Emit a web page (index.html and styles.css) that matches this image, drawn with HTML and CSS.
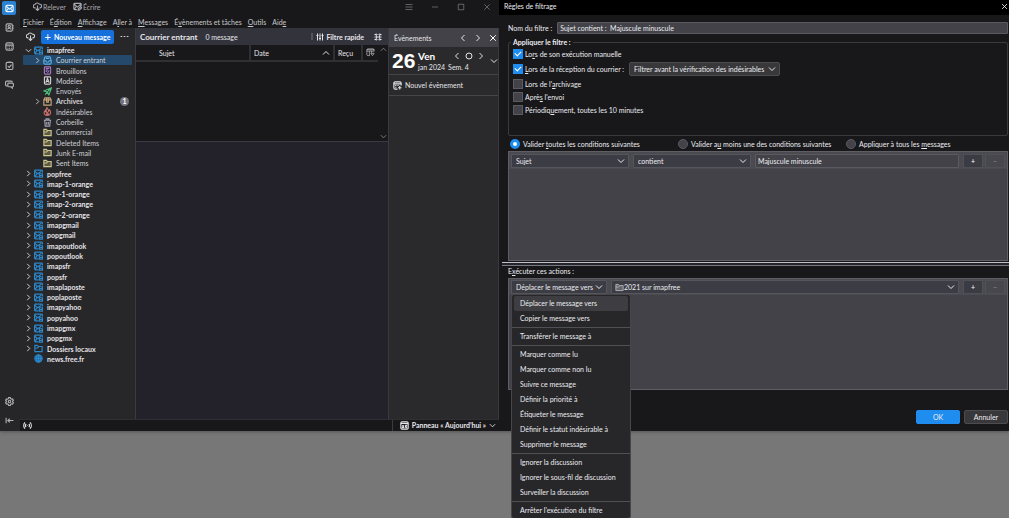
FILE: index.html
```html
<!DOCTYPE html>
<html lang="fr">
<head>
<meta charset="utf-8">
<title>Courrier entrant - Règles de filtrage</title>
<link rel="stylesheet" href="styles.css">
</head>
<body>
<svg class="sprite" aria-hidden="true">
  <symbol id="i-mail" viewBox="0 0 16 16"><rect x="1.5" y="2.5" width="13" height="11" rx="2"/><path d="M2 4l6 5 6-5M2 13l4-5M14 13l-4-5"/></symbol>
  <symbol id="i-book" viewBox="0 0 16 16"><rect x="2" y="1.500" width="11" height="13" rx="2"/><circle cx="7.500" cy="6" r="2"/><path d="M4.500 11.500c0-3 6-3 6 0M14.500 4v2M14.500 8v2M14.500 12v1"/></symbol>
  <symbol id="i-cal" viewBox="0 0 16 16"><rect x="1.500" y="1.500" width="13" height="13" rx="3"/><path d="M1.500 5.500h13M4.500 8.500h1.500M7.500 8.500h1.500M10.500 8.500h1.500M4.500 11.500h1.500M7.500 11.500h1.500M10.500 11.500h1.500"/></symbol>
  <symbol id="i-task" viewBox="0 0 16 16"><rect x="2" y="2.500" width="12" height="12.500" rx="2"/><path d="M5.500 2.500h5M5 9l2.500 2.500 4-5"/></symbol>
  <symbol id="i-chat" viewBox="0 0 16 16"><path d="M4 10.500H2.500a1.500 1.500 0 0 1-1.500-1.500V4a2 2 0 0 1 2-2h8a2 2 0 0 1 2 2"/><path d="M6.500 5.500H13a2 2 0 0 1 2 2V10a2 2 0 0 1-2 2v2.500L10.500 12h-4a1.500 1.500 0 0 1-1.500-1.500V7a1.500 1.500 0 0 1 1.500-1.500z"/></symbol>
  <symbol id="i-gear" viewBox="0 0 16 16"><path d="M6.500 1h3l.5 2 1.500.9 2-.6 1.500 2.600-1.500 1.400v1.400l1.500 1.400-1.500 2.600-2-.6-1.500.9-.5 2h-3l-.5-2-1.500-.9-2 .6L1 10.100l1.500-1.400V7.300L1 5.900l1.500-2.600 2 .6L6 3z"/><circle cx="8" cy="8" r="2.200"/></symbol>
  <symbol id="i-collapse" viewBox="0 0 16 16"><path d="M2 3v10M5 8h10M8.500 4.500L5 8l3.500 3.500"/></symbol>
  <symbol id="i-cloud" viewBox="0 0 16 16"><path d="M4.500 10.500h-1a3 3 0 0 1 0-6A4.500 4.500 0 0 1 11.500 4a3.200 3.200 0 0 1 1 6.500h-1M8 6v9M5 12l3 3 3-3"/></symbol>
  <symbol id="i-write" viewBox="0 0 16 16"><path d="M14.500 7V4a1.500 1.500 0 0 0-1.500-1.500H3A1.500 1.500 0 0 0 1.500 4v8A1.500 1.500 0 0 0 3 13.500h4M2 4l6 5 6-5M2 13l4-5M9 14.500l.5-2.500 4-4 2 2-4 4z"/></symbol>
  <symbol id="i-account" viewBox="0 0 16 16"><path d="M15 6V3.500A1.500 1.500 0 0 0 13.500 2h-11A1.500 1.500 0 0 0 1 3.500v9A1.500 1.500 0 0 0 2.500 14H8M1.500 4l5 4.500L13 4M2 13l3.500-5M9.500 8.500h5.500v3H9.500zM9.500 11.500h5.500v3H9.500z"/></symbol>
  <symbol id="i-inbox" viewBox="0 0 16 16"><path d="M1.500 8l1.500-5a1.500 1.500 0 0 1 1.500-1.500h7A1.500 1.500 0 0 1 13 3l1.500 5v4.500a2 2 0 0 1-2 2h-9a2 2 0 0 1-2-2zM1.500 8.500h3.500c0 3.500 6 3.500 6 0h3.500M5 4.500h6"/></symbol>
  <symbol id="i-draft" viewBox="0 0 16 16"><rect x="2.500" y="1.500" width="11" height="13" rx="1.500"/><path d="M5 4.500h6M5 7h4M5 9.500h2M8 12l3-4"/></symbol>
  <symbol id="i-template" viewBox="0 0 16 16"><rect x="2.500" y="1.500" width="11" height="13" rx="1.500"/><path d="M5 12l3-8 3 8M6 9.500h4"/></symbol>
  <symbol id="i-sent" viewBox="0 0 16 16"><path d="M1.500 7L15 1.500 10.500 14 7.500 9zM7.500 9L15 1.500M7.500 9L4 13.500"/></symbol>
  <symbol id="i-archive" viewBox="0 0 16 16"><path d="M1.500 5L3.500 1.500h9L14.500 5v9.500h-13zM1.500 5h13M6.500 1.500V9h3V1.500"/></symbol>
  <symbol id="i-junk" viewBox="0 0 16 16"><path d="M8 15c-7 0-7-6-4-9 0 2 1 3 2 3 0-4-1-5 1-8 1 3 3 3 3 6l1.500-2c3 4 3 10-3.500 10zM8 15c-3-2-1-3 0-5 1 2 3 3 0 5"/></symbol>
  <symbol id="i-trash" viewBox="0 0 16 16"><path d="M1.500 4h13M5.500 4V1.500h5V4M3 4l1 10.500h8L13 4M6.500 7v5M9.500 7v5"/></symbol>
  <symbol id="i-folder" viewBox="0 0 16 16"><path d="M1.500 13.500v-11h4.500L8 4.500h6.500v9zM1.500 7h5L8 5"/></symbol>
  <symbol id="i-globe" viewBox="0 0 16 16"><circle cx="8" cy="8" r="6.500"/><path d="M1.500 8h13M8 1.500v13M8 1.500c-5 4-5 9 0 13M8 1.500c5 4 5 9 0 13"/></symbol>
  <symbol id="i-right" viewBox="0 0 16 16"><path d="M5 2l6 6-6 6"/></symbol>
  <symbol id="i-left" viewBox="0 0 16 16"><path d="M11 2L5 8l6 6"/></symbol>
  <symbol id="i-down" viewBox="0 0 16 16"><path d="M2 5l6 6 6-6"/></symbol>
  <symbol id="i-up" viewBox="0 0 16 16"><path d="M2 11l6-6 6 6"/></symbol>
  <symbol id="i-x" viewBox="0 0 16 16"><path d="M2.500 2.500l11 11M13.500 2.500l-11 11"/></symbol>
  <symbol id="i-menu" viewBox="0 0 16 16"><path d="M1 3h14M1 8h14M1 13h14"/></symbol>
  <symbol id="i-min" viewBox="0 0 16 16"><path d="M2 8h12"/></symbol>
  <symbol id="i-max" viewBox="0 0 16 16"><path d="M2.500 2.500h11v11h-11z"/></symbol>
  <symbol id="i-dots" viewBox="0 0 16 16"><path d="M1 8h3M6.500 8h3M12 8h3"/></symbol>
  <symbol id="i-filter" viewBox="0 0 16 16"><path d="M3 1v14M8 1v14M13 1v14M1 5h4M6 11h4M11 5h4"/></symbol>
  <symbol id="i-display" viewBox="0 0 16 16"><path d="M1 3h3M7 3h2M12 3h3M4 8h8M1 13h3M7 13h2M12 13h3M4.500 1v14M11.500 1v14M1 8h2M13 8h2"/></symbol>
  <symbol id="i-cols" viewBox="0 0 16 16"><path d="M14.500 6V3.500a2 2 0 0 0-2-2h-9a2 2 0 0 0-2 2v8a2 2 0 0 0 2 2H7M1.500 3h13M1.500 5.500h13M6 5v8M10 5v4M8.500 9.500h6l-3 4z"/></symbol>
  <symbol id="i-newcal" viewBox="0 0 16 16"><path d="M14.500 8V4a2.500 2.500 0 0 0-2.500-2.500H4A2.500 2.500 0 0 0 1.500 4v8A2.500 2.500 0 0 0 4 14.500h4M1.500 5h13M4 8h2M8 8h2M4 11h2M12 9v6M9 12h6"/></symbol>
  <symbol id="i-today" viewBox="0 0 16 16"><rect x="1.500" y="1.500" width="13" height="13" rx="2"/><path d="M1.500 4.500h13M4 7.500l3 4M7 7.500l-3 4.500h3M9 7.500h3l-3 4.500M9 9l3.500 3.500"/></symbol>
  <symbol id="i-online" viewBox="0 0 16 16"><path d="M3.500 2.500c-3 3-3 8 0 11M12.500 2.500c3 3 3 8 0 11M5.500 5c-1.500 2-1.500 4 0 6M10.500 5c1.500 2 1.500 4 0 6M7.500 8h1"/></symbol>
  <symbol id="i-ring" viewBox="0 0 16 16"><circle cx="8" cy="8" r="6"/></symbol>
</svg>

<div class="desktop">
  <main class="mail">
    <nav class="spaces" aria-label="Espaces">
      <button class="space active" aria-label="Courrier"><svg><use href="#i-mail"/></svg></button>
      <button class="space" aria-label="Adresses"><svg><use href="#i-book"/></svg></button>
      <button class="space" aria-label="Agenda"><svg><use href="#i-cal"/></svg></button>
      <button class="space" aria-label="Tâches"><svg><use href="#i-task"/></svg></button>
      <button class="space" aria-label="Discussion"><svg><use href="#i-chat"/></svg></button>
      <button class="space push" aria-label="Paramètres"><svg><use href="#i-gear"/></svg></button>
      <button class="space" aria-label="Réduire"><svg><use href="#i-collapse"/></svg></button>
    </nav>
    <div class="mail-body">
      <header class="titlebar">
        <button><svg><use href="#i-cloud"/></svg>Relever</button>
        <button><svg><use href="#i-write"/></svg>Écrire</button>
        <div class="controls">
          <button aria-label="Menu"><svg><use href="#i-menu"/></svg></button>
          <button aria-label="Minimiser"><svg><use href="#i-min"/></svg></button>
          <button aria-label="Agrandir"><svg><use href="#i-max"/></svg></button>
          <button aria-label="Fermer"><svg><use href="#i-x"/></svg></button>
        </div>
      </header>
      <nav class="menubar">
        <button><u>F</u>ichier</button><button>É<u>d</u>ition</button><button><u>A</u>ffichage</button><button>A<u>l</u>ler à</button><button><u>M</u>essages</button><button>É<u>v</u>ènements et tâches</button><button><u>O</u>utils</button><button>Aid<u>e</u></button>
      </nav>
      <div class="panes">
        <section class="folders">
          <div class="folder-head">
            <button aria-label="Relever"><svg><use href="#i-cloud"/></svg></button>
            <button class="new-msg"><span class="plus">+</span>Nouveau message</button>
            <button aria-label="Options"><svg><use href="#i-dots"/></svg></button>
          </div>
          <ul class="tree">
            <li class="acc"><svg class="tw"><use href="#i-down"/></svg><svg class="blue"><use href="#i-account"/></svg>imapfree</li>
            <li class="sub sel"><svg class="tw"><use href="#i-right"/></svg><svg class="sky"><use href="#i-inbox"/></svg>Courrier entrant</li>
            <li class="sub"><i class="tw"></i><svg class="purple"><use href="#i-draft"/></svg>Brouillons</li>
            <li class="sub"><i class="tw"></i><svg><use href="#i-template"/></svg>Modèles</li>
            <li class="sub"><i class="tw"></i><svg class="green"><use href="#i-sent"/></svg>Envoyés</li>
            <li class="sub bold"><svg class="tw"><use href="#i-right"/></svg><svg class="tan"><use href="#i-archive"/></svg>Archives<span class="count">1</span></li>
            <li class="sub"><i class="tw"></i><svg class="red"><use href="#i-junk"/></svg>Indésirables</li>
            <li class="sub"><i class="tw"></i><svg class="grey"><use href="#i-trash"/></svg>Corbeille</li>
            <li class="sub"><i class="tw"></i><svg class="sand"><use href="#i-folder"/></svg>Commercial</li>
            <li class="sub"><i class="tw"></i><svg class="sand"><use href="#i-folder"/></svg>Deleted Items</li>
            <li class="sub"><i class="tw"></i><svg class="sand"><use href="#i-folder"/></svg>Junk E-mail</li>
            <li class="sub"><i class="tw"></i><svg class="sand"><use href="#i-folder"/></svg>Sent Items</li>
            <li class="acc"><svg class="tw"><use href="#i-right"/></svg><svg class="blue"><use href="#i-account"/></svg>popfree</li>
            <li class="acc"><svg class="tw"><use href="#i-right"/></svg><svg class="blue"><use href="#i-account"/></svg>imap-1-orange</li>
            <li class="acc"><svg class="tw"><use href="#i-right"/></svg><svg class="blue"><use href="#i-account"/></svg>pop-1-orange</li>
            <li class="acc"><svg class="tw"><use href="#i-right"/></svg><svg class="blue"><use href="#i-account"/></svg>imap-2-orange</li>
            <li class="acc"><svg class="tw"><use href="#i-right"/></svg><svg class="blue"><use href="#i-account"/></svg>pop-2-orange</li>
            <li class="acc"><svg class="tw"><use href="#i-right"/></svg><svg class="blue"><use href="#i-account"/></svg>imapgmail</li>
            <li class="acc"><svg class="tw"><use href="#i-right"/></svg><svg class="blue"><use href="#i-account"/></svg>popgmail</li>
            <li class="acc"><svg class="tw"><use href="#i-right"/></svg><svg class="blue"><use href="#i-account"/></svg>imapoutlook</li>
            <li class="acc"><svg class="tw"><use href="#i-right"/></svg><svg class="blue"><use href="#i-account"/></svg>popoutlook</li>
            <li class="acc"><svg class="tw"><use href="#i-right"/></svg><svg class="blue"><use href="#i-account"/></svg>imapsfr</li>
            <li class="acc"><svg class="tw"><use href="#i-right"/></svg><svg class="blue"><use href="#i-account"/></svg>popsfr</li>
            <li class="acc"><svg class="tw"><use href="#i-right"/></svg><svg class="blue"><use href="#i-account"/></svg>imaplaposte</li>
            <li class="acc"><svg class="tw"><use href="#i-right"/></svg><svg class="blue"><use href="#i-account"/></svg>poplaposte</li>
            <li class="acc"><svg class="tw"><use href="#i-right"/></svg><svg class="blue"><use href="#i-account"/></svg>imapyahoo</li>
            <li class="acc"><svg class="tw"><use href="#i-right"/></svg><svg class="blue"><use href="#i-account"/></svg>popyahoo</li>
            <li class="acc"><svg class="tw"><use href="#i-right"/></svg><svg class="blue"><use href="#i-account"/></svg>imapgmx</li>
            <li class="acc"><svg class="tw"><use href="#i-right"/></svg><svg class="blue"><use href="#i-account"/></svg>popgmx</li>
            <li class="acc"><svg class="tw"><use href="#i-right"/></svg><svg class="blue"><use href="#i-folder"/></svg>Dossiers locaux</li>
            <li class="acc"><i class="tw"></i><svg class="blue globe"><use href="#i-globe"/></svg>news.free.fr</li>
          </ul>
        </section>
        <section class="thread">
          <header class="thread-head">
            <h1>Courrier entrant</h1><span>0 message</span>
            <button class="quick"><svg><use href="#i-filter"/></svg>Filtre rapide</button>
            <button aria-label="Affichage"><svg><use href="#i-display"/></svg></button>
          </header>
          <div class="list">
            <table>
              <thead><tr><th class="c-subject">Sujet</th><th><span class="date">Date<svg><use href="#i-up"/></svg></span></th><th class="c-recv">Reçu</th><th class="c-pick"><svg><use href="#i-cols"/></svg></th></tr></thead>
            </table>
            <div class="scroll"><svg><use href="#i-up"/></svg><svg><use href="#i-down"/></svg></div>
          </div>
          <div class="preview"></div>
        </section>
        <aside class="today">
          <header class="today-head"><h2>Évènements</h2>
            <button aria-label="Précédent"><svg><use href="#i-left"/></svg></button>
            <button aria-label="Suivant"><svg><use href="#i-right"/></svg></button>
            <button class="bright" aria-label="Fermer"><svg><use href="#i-x"/></svg></button>
          </header>
          <div class="day">
            <strong class="num">26</strong>
            <div class="day-info">
              <div class="day-top"><strong>Ven</strong>
                <button aria-label="Jour précédent"><svg><use href="#i-left"/></svg></button>
                <button aria-label="Aujourd'hui"><svg><use href="#i-ring"/></svg></button>
                <button aria-label="Jour suivant"><svg><use href="#i-right"/></svg></button>
              </div>
              <div class="month"><span>jan 2024</span><span>Sem. 4</span></div>
            </div>
            <button aria-label="Mini-mois"><svg><use href="#i-down"/></svg></button>
          </div>
          <button class="new-event"><svg><use href="#i-newcal"/></svg>Nouvel évènement</button>
        </aside>
      </div>
      <footer class="status">
        <svg><use href="#i-online"/></svg>
        <button><svg><use href="#i-today"/></svg>Panneau « Aujourd’hui »<svg class="chev"><use href="#i-down"/></svg></button>
      </footer>
    </div>
  </main>

  <form class="dialog" onsubmit="return false">
    <header class="dlg-title"><span>Règles de filtrage</span><button type="button" aria-label="Fermer"><svg><use href="#i-x"/></svg></button></header>
    <div class="dlg-body">
      <div class="name"><label for="fname">Nom du f<u>i</u>ltre :</label><input id="fname" type="text" value="Sujet contient :  Majuscule minuscule"></div>
      <fieldset>
        <legend>Appliquer le filtre :</legend>
        <label class="opt"><input type="checkbox" checked><span>Lo<u>r</u>s de son exécution manuelle</span></label>
        <div class="opt tall">
          <label class="opt"><input type="checkbox" checked><span><u>L</u>ors de la réception du courrier :</span></label>
          <span class="pick when"><select aria-label="Moment du filtrage"><option>Filtrer avant la vérification des indésirables</option></select><svg><use href="#i-down"/></svg></span>
        </div>
        <label class="opt"><input type="checkbox"><span>Lors de l'<u>a</u>rchivage</span></label>
        <label class="opt"><input type="checkbox"><span>Aprè<u>s</u> l'envoi</span></label>
        <label class="opt"><input type="checkbox"><span>Périodiq<u>u</u>ement, toutes les 10 minutes</span></label>
      </fieldset>
      <div class="radios">
        <label class="opt"><input type="radio" name="match" checked><span>Valider <u>t</u>outes les conditions suivantes</span></label>
        <label class="opt"><input type="radio" name="match"><span>Valider a<u>u</u> moins une des conditions suivantes</span></label>
        <label class="opt"><input type="radio" name="match"><span>Appliquer à tous les <u>m</u>essages</span></label>
      </div>
      <div class="box conditions">
        <div class="rule">
          <span class="pick attr"><select aria-label="Champ"><option>Sujet</option></select><svg><use href="#i-down"/></svg></span>
          <span class="pick attr"><select aria-label="Opérateur"><option>contient</option></select><svg><use href="#i-down"/></svg></span>
          <input type="text" aria-label="Valeur" value="Majuscule minuscule">
          <button type="button" class="step">+</button><button type="button" class="step" disabled>−</button>
        </div>
      </div>
    </div>
    <hr class="splitter">
    <div class="dlg-body lower">
      <div class="act-label">E<u>x</u>écuter ces actions :</div>
      <div class="box actions">
        <div class="rule">
          <div class="anchor">
            <span class="pick"><select aria-label="Action"><option>Déplacer le message vers</option></select><svg><use href="#i-down"/></svg></span>
            <ul class="menu" role="menu">
              <li class="hot" role="menuitem">Déplacer le message vers</li>
              <li role="menuitem">Copier le message vers</li>
              <li class="sep" role="separator"></li>
              <li role="menuitem">Transférer le message à</li>
              <li class="sep" role="separator"></li>
              <li role="menuitem">Marquer comme lu</li>
              <li role="menuitem">Marquer comme non lu</li>
              <li role="menuitem">Suivre ce message</li>
              <li role="menuitem">Définir la priorité à</li>
              <li role="menuitem">Étiqueter le message</li>
              <li role="menuitem">Définir le statut indésirable à</li>
              <li role="menuitem">Supprimer le message</li>
              <li class="sep" role="separator"></li>
              <li role="menuitem">Ignorer la discussion</li>
              <li role="menuitem">Ignorer le sous-fil de discussion</li>
              <li role="menuitem">Surveiller la discussion</li>
              <li class="sep" role="separator"></li>
              <li role="menuitem">Arrêter l'exécution du filtre</li>
            </ul>
          </div>
          <span class="pick target"><svg class="lead"><use href="#i-folder"/></svg><select aria-label="Dossier"><option>2021 sur imapfree</option></select><svg><use href="#i-down"/></svg></span>
          <button type="button" class="step">+</button><button type="button" class="step" disabled>−</button>
        </div>
      </div>
      <div class="buttons"><button class="ok">OK</button><button type="button">Annuler</button></div>
    </div>
  </form>
</div>
</body>
</html>
```

FILE: styles.css
```css
* { box-sizing: border-box; }

body {
  margin: 0;
  height: 100vh;
  overflow: hidden;
  background: #777;
  color: #e6e6ea;
  font: 7px/10px Lato, "Open Sans", sans-serif;
}

button, input, select {
  font: inherit;
  color: inherit;
  margin: 0;
  padding: 0;
  border: 0;
  background: none;
}

button { display: flex; align-items: center; white-space: nowrap; }
ul { list-style: none; margin: 0; padding: 0; }
h1, h2 { margin: 0; font-size: 8px; line-height: 10px; }
svg { width: 9px; height: 9px; flex: none; fill: none; stroke: currentColor; stroke-width: 2; }
u { text-underline-offset: 1px; text-decoration-thickness: 1px; }
.sprite { display: none; }

.desktop {
  display: grid;
  grid-template-columns: 499fr 510fr;
  height: 83.2vh;
  box-shadow: 0 1px 3px #555;
}

/* main window */
.mail { display: flex; min-width: 0; background: #18181a; }

.spaces {
  display: flex;
  flex-direction: column;
  align-items: center;
  gap: 5px;
  width: 20px;
  padding: 1px 2px 3px 0;
  background: #262628;
  color: #b0b0b4;
}
.space { width: 14px; height: 14px; justify-content: center; border-radius: 2px; }
.space.active { background: #2a83d2; color: #e8f4ff; }
.push { margin-top: auto; }

.mail-body { flex: 1; display: flex; flex-direction: column; min-width: 0; }

.titlebar { display: flex; align-items: center; height: 13px; padding-left: 13px; color: #a9a9ad; }
.titlebar button { gap: 1px; margin-right: 7px; }
.titlebar .controls { display: flex; margin-left: auto; gap: 18px; padding-right: 8px; }
.titlebar .controls button { margin: 0; }
.controls svg { width: 8px; height: 8px; stroke-width: 1; }

.menubar { display: flex; gap: 6px; height: 15px; padding: 4px 3px 0; color: #c8c8cc; }
.menubar button { height: 10px; }

.panes { flex: 1; display: grid; grid-template-columns: 116px 1fr 111px; min-height: 0; }

.folders { background: #27272a; color: #d0d0d4; border-right: 1px solid #3a3a40; }
.folder-head { display: flex; align-items: center; justify-content: space-between; height: 17px; padding: 0 6px; }
.new-msg { height: 14px; padding: 0 4px; border-radius: 2px; background: #1670dc; color: #fff; gap: 3px; font-weight: bold; }
.plus { font-size: 11px; font-weight: normal; }
.folder-head svg { width: 9px; height: 9px; }

.tree { display: flex; flex-direction: column; justify-content: space-between; height: 319px; padding: 0 3px; }
.tree li { display: flex; align-items: center; gap: 4px; height: 10px; padding-left: 2px; border-radius: 1px; }
.tree .sub { padding-left: 11px; }
.tree .acc, .tree .bold { font-weight: bold; }
.tree .acc { color: #e4e4e8; }
.tree .sel { background: #24496a; }
.tree .tw { width: 7px; height: 7px; flex: none; margin-right: -2px; stroke-width: 2; }
.tree .blue { color: #2c86c8; }
.tree .globe { fill: #1b5e96; }
.sky { color: #5fb0e8; }
.purple { color: #a777c8; }
.green { color: #4fc07c; }
.tan { color: #c9a67c; }
.red { color: #c8706c; }
.grey { color: #a2a2b2; }
.sand { color: #cbc68e; fill: #5d5b45; }
.count { margin-left: auto; margin-right: 3px; width: 9px; height: 9px; border-radius: 5px; background: #74747e; color: #fff; line-height: 9px; text-align: center; }

.thread { display: grid; grid-template-rows: 17px 97px 1fr; min-width: 0; }
.thread-head { display: flex; align-items: center; gap: 8px; padding: 0 6px 0 4px; background: #33333b; }
.quick { margin-left: auto; padding-left: 3px; gap: 2px; border-left: 2px solid #55555d; height: 7px; font-weight: bold; margin-right: 2px; }
.thread-head svg { width: 8px; height: 8px; }
.list { display: flex; border-bottom: 1px solid #3a3a42; }
.list table { flex: 1; width: 100%; height: 17px; table-layout: fixed; border-collapse: collapse; border-bottom: 2px solid #303034; }
.list th { padding: 0 3px; border-right: 2px solid #303034; font-weight: normal; text-align: left; }
.list th:last-child { border-right: 0; }
.list .c-subject { width: 114px; padding-left: 23px; }
.list .c-recv { width: 28px; }
.list .c-pick { width: 16px; }
.c-pick svg { display: block; stroke-width: 1; }
.date { display: flex; justify-content: space-between; align-items: center; }
.date svg { width: 8px; height: 8px; stroke-width: 2; }
.scroll { display: flex; flex-direction: column; justify-content: space-between; align-items: center; width: 10px; padding: 1px 0; color: #888; }
.scroll svg { width: 7px; height: 7px; }
.preview { background: #23222b; }

.today { background: #2a2a2c; border: solid #3a3a40; border-width: 0 1px; }
.today-head { display: flex; align-items: center; height: 19px; padding: 0 1px 0 5px; gap: 7px; background: #424248; }
.today-head h2 { font-size: 7px; font-weight: normal; margin-right: auto; }
.today-head svg { width: 8px; height: 8px; }
.bright { color: #fff; }
.day { display: flex; align-items: center; height: 28px; padding-left: 3px; border-bottom: 1px solid #454549; }
.num { width: 26px; font: bold 21px/24px "Liberation Sans", sans-serif; color: #fff; }
.day-info { flex: 1; }
.day-top { display: flex; align-items: center; gap: 4px; height: 13px; }
.day-top strong { margin-right: auto; font-size: 10px; color: #fff; }
.day svg { width: 8px; height: 8px; }
.day > button { margin-left: 5px; }
.month { display: flex; gap: 3px; height: 10px; }
.new-event { width: 100%; height: 21px; gap: 3px; padding-left: 4px; border-bottom: 1px solid #454549; }

.status { display: flex; justify-content: space-between; align-items: center; height: 12px; padding: 0 3px 0 3px; border-top: 1px solid #303034; }
.status button { gap: 3px; height: 11px; padding-left: 7px; border-left: 1px solid #3c3c40; font-weight: bold; }
.status .chev { width: 7px; height: 7px; }

/* filter dialog */
.dialog { display: flex; flex-direction: column; min-width: 0; background: #18181b; color: #ececf0; }
.dlg-title { display: flex; justify-content: space-between; height: 15px; padding: 1px 1px 0 5px; background: #000; }
.dlg-title svg { width: 7px; height: 7px; stroke-width: 2; }
.dlg-title button { height: 10px; }
.dlg-body { display: flex; flex-direction: column; padding: 7px 1px 0 9px; }
.name { display: flex; align-items: center; gap: 5px; height: 12px; }
.name input { flex: 1; min-width: 0; white-space: pre; }

input[type="text"] { height: 12px; padding: 0 2px; border: 1px solid #5a5a60; border-radius: 1px; background: #424248; }

fieldset { display: flex; flex-direction: column; gap: 3px; margin: 3px 0 0; height: 99px; padding: 2px 4px; border: 1px solid #3a3a3d; border-radius: 2px; }
legend { padding: 0 2px; margin-left: -2px; font-weight: bold; line-height: 10px; }
.opt { display: flex; align-items: center; gap: 2px; height: 10px; white-space: nowrap; }
.opt.tall { height: 14px; gap: 5px; }

input[type="checkbox"], input[type="radio"] { appearance: none; width: 10px; height: 10px; flex: none; border: 1px solid #5b5b62; background: #424248; }
input[type="checkbox"]:checked { border-color: #1f8df0; background: #1f8df0; }
input[type="checkbox"]:checked::after { content: ""; display: block; width: 3px; height: 5px; margin-left: 2px; border: solid #fff; border-width: 0 1px 1px 0; transform: rotate(45deg); }
input[type="radio"] { border-radius: 5px; }
input[type="radio"]:checked { border: 3px solid #1f8df0; background: #fff; }

.radios { display: grid; grid-template-columns: 168fr 168fr 162fr; padding: 3px 0 2px 2px; }
.radios .opt { gap: 3px; }

.pick { display: inline-flex; align-items: center; height: 14px; padding: 0 3px 0 4px; border: 1px solid #55555c; border-radius: 1px; background: #3c3c44; white-space: nowrap; }
.pick select { flex: 1; appearance: none; outline: 0; line-height: 10px; }
.pick svg { width: 8px; height: 8px; stroke-width: 2; }
.pick .lead { width: 9px; height: 9px; stroke-width: 1; fill: #66666c; }
.when { background: #38383b; border-color: #4c4c50; border-radius: 2px; gap: 3px; }

.box { border: 1px solid #5e5e64; background: #424248; }
.rule { display: flex; align-items: center; gap: 4px; height: 17px; padding: 0 2px; background: #4a4a50; }
.attr { width: 118px; }
.rule > input[type="text"] { flex: 1; min-width: 0; height: 14px; }
.step { width: 20px; height: 14px; justify-content: center; background: #3b3b43; border: 1px solid #505057; font-weight: bold; }
.step:disabled { margin-left: -2px; background: #47474d; color: #7a7a82; }
.conditions { height: 110px; }

.splitter { height: 4px; margin: 1px 0 0 3px; border: solid #77777f; border-width: 1px 0; border-top-color: #c0c0ca; background: #25252d; }
.lower { padding-top: 0; }
.act-label { height: 12px; }
.actions { height: 112px; }
.actions .rule { height: 16px; }
.anchor { position: relative; display: flex; }
.anchor .pick { gap: 1px; }
.rule .target { flex: 1; padding-left: 3px; }

.menu {
  position: absolute;
  z-index: 2;
  top: 100%;
  left: 0;
  width: 120px;
  padding: 1px 2px 0;
  border: 1px solid #46464a;
  border-radius: 3px;
  background: #27272a;
}
.menu li { height: 15px; padding-left: 6px; line-height: 15px; white-space: nowrap; border-radius: 2px; }
.menu .hot { background: #3e3e42; }
.menu .sep { height: 3px; margin: 0 -2px; padding: 0; border-radius: 0; background: linear-gradient(#505054, #505054) center / 100% 1px no-repeat; }

.buttons { display: flex; justify-content: flex-end; gap: 4px; padding-top: 20px; }
.buttons button { width: 44px; height: 14px; justify-content: center; border: 1px solid #4c4c50; border-radius: 2px; background: #38383b; }
.buttons .ok { border-color: #1f8df0; background: #1f8df0; }
```
